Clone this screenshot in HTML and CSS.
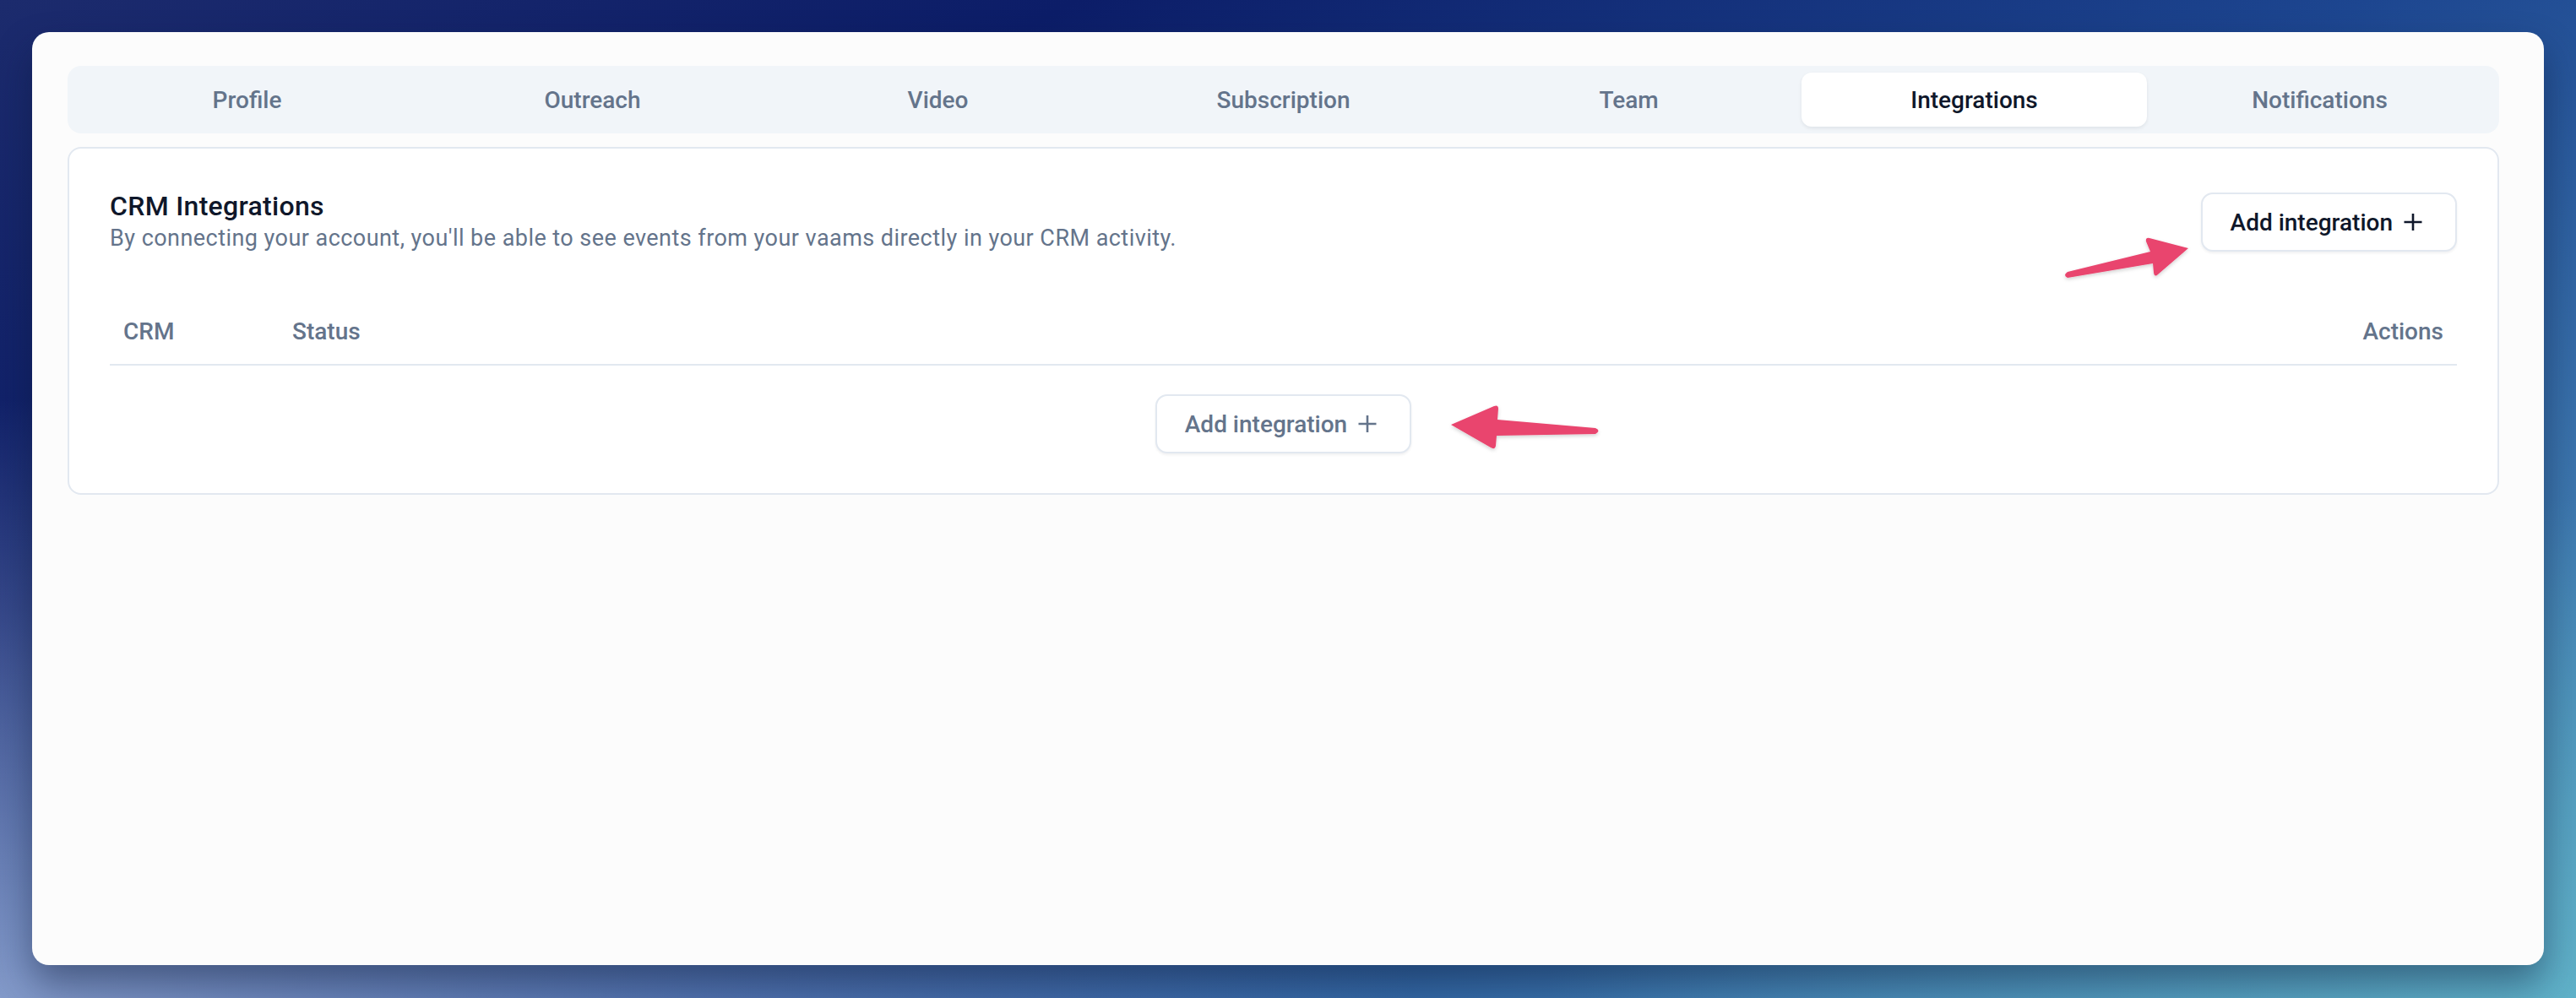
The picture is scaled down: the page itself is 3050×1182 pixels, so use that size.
FILE: index.html
```html
<!DOCTYPE html>
<html lang="en">
<head>
  <meta charset="UTF-8">
  <meta name="viewport" content="width=device-width, initial-scale=1.0">
  <title>Settings - Integrations</title>
  <link rel="stylesheet" href="styles.css">
</head>
<body>

  <div class="screen">
    <div class="window">

      <nav class="tabs">
        <a class="tab">Profile</a>
        <a class="tab">Outreach</a>
        <a class="tab">Video</a>
        <a class="tab">Subscription</a>
        <a class="tab">Team</a>
        <a class="tab active">Integrations</a>
        <a class="tab">Notifications</a>
      </nav>

      <section class="card">
        <div class="card-header">
          <div>
            <h2 class="card-title">CRM Integrations</h2>
            <p class="card-desc">By connecting your account, you'll be able to see events from your vaams directly in your CRM activity.</p>
          </div>
          <button class="btn">
            Add integration
            <svg class="plus" viewBox="0 0 24 24"><path d="M12 2v20M1.5 12h21"/></svg>
          </button>
        </div>

        <div class="crm-table">
          <div class="table-head">
            <span>CRM</span>
            <span>Status</span>
            <span>Actions</span>
          </div>
          <div class="table-empty">
            <button class="btn btn-muted">
              Add integration
              <svg class="plus" viewBox="0 0 24 24"><path d="M12 2v20M1.5 12h21"/></svg>
            </button>
          </div>
        </div>
      </section>

    </div>

    <!-- annotation arrows -->
    <svg class="arrows" viewBox="0 0 3050 1182">
      <defs>
        <filter id="arrowShadow" x="-10%" y="-30%" width="120%" height="160%">
          <feDropShadow dx="0" dy="2" stdDeviation="2" flood-color="#000" flood-opacity="0.18"/>
        </filter>
      </defs>
      <path class="arrow" d="M2591 294 L2545 282 Q2540 281 2541 286 L2546 298 L2448 322 Q2442 326 2448 329 L2549 312 L2550 323 Q2551 329 2555 325 Z"/>
      <path class="arrow" d="M1718 503 L1769 481 Q1774 479 1774 484 L1773 497 L1889 507 Q1896 510 1889 514 L1772 516 L1771 528 Q1770 533 1765 530 Z"/>
    </svg>
  </div>

</body>
</html>
```

FILE: styles.css
```css
body {
  margin: 0;
  font-family: Roboto, 'Liberation Sans', sans-serif;
  color: #0f172a;
  background:
    radial-gradient(ellipse 55% 60% at 0% 100%, rgba(150, 172, 215, 0.85), rgba(150, 172, 215, 0) 100%),
    radial-gradient(ellipse 40% 50% at 100% 100%, rgba(100, 185, 205, 0.8), rgba(100, 185, 205, 0) 100%),
    linear-gradient(150deg, #1c2b6d 0%, #0c1d68 25%, #1d4690 55%, #3d77ae 80%, #4f94b8 100%);
}
.screen {
  position: relative;
  height: 1182px;
  padding: 38px;
  box-sizing: border-box;
}
.window {
  height: 1105px;
  padding: 40px 53px 0 42px;
  box-sizing: border-box;
  background-color: #fcfcfc;
  border-radius: 20px;
  box-shadow: 0 22px 44px rgba(12, 24, 56, 0.45);
}

/* tabs */
.tabs {
  display: flex;
  height: 80px;
  padding: 8px;
  box-sizing: border-box;
  background-color: #f1f5f9;
  border-radius: 16px;
}
.tab {
  flex: 1;
  display: flex;
  align-items: center;
  justify-content: center;
  font-size: 28px;
  font-weight: 500;
  color: #64748b;
  border-radius: 12px;
  cursor: pointer;
}
.tab.active {
  background-color: #fff;
  color: #0f172a;
  box-shadow: 0 2px 4px rgba(15, 23, 42, 0.08);
}

/* card */
.card {
  margin-top: 16px;
  padding: 49px 48px 47px;
  background-color: #fff;
  border: 2px solid #e2e8f0;
  border-radius: 16px;
}
.card-header {
  display: flex;
  justify-content: space-between;
  align-items: center;
}
.card-title {
  margin: 0;
  font-size: 32px;
  line-height: 38px;
  font-weight: 500;
  letter-spacing: 0.3px;
  color: #0f172a;
}
.card-desc {
  margin: 0;
  font-size: 27px;
  line-height: 38px;
  letter-spacing: 0.45px;
  color: #64748b;
}

/* buttons */
.btn {
  display: inline-flex;
  align-items: center;
  gap: 12px;
  height: 70px;
  padding: 0 38px 0 33px;
  box-sizing: border-box;
  font-family: inherit;
  font-size: 28px;
  font-weight: 500;
  color: #0f172a;
  background-color: #fff;
  border: 2px solid #e2e8f0;
  border-radius: 14px;
  box-shadow: 0 2px 3px rgba(15, 23, 42, 0.06);
  cursor: pointer;
}
.btn-muted {
  color: #64748b;
}
.plus {
  width: 24px;
  height: 24px;
  fill: none;
  stroke: currentColor;
  stroke-width: 2.6;
}

/* table */
.crm-table {
  margin-top: 56px;
}
.table-head {
  display: grid;
  grid-template-columns: 200px 1fr auto;
  padding: 16px 16px 18px;
  font-size: 28px;
  line-height: 40px;
  font-weight: 500;
  color: #64748b;
  border-bottom: 2px solid #e2e8f0;
}
.table-empty {
  display: flex;
  justify-content: center;
  padding-top: 34px;
}

/* annotation overlay */
.arrows {
  position: absolute;
  top: 0;
  left: 0;
  width: 3050px;
  height: 1182px;
  pointer-events: none;
}
.arrow {
  fill: #e9456e;
  filter: url(#arrowShadow);
}
```
